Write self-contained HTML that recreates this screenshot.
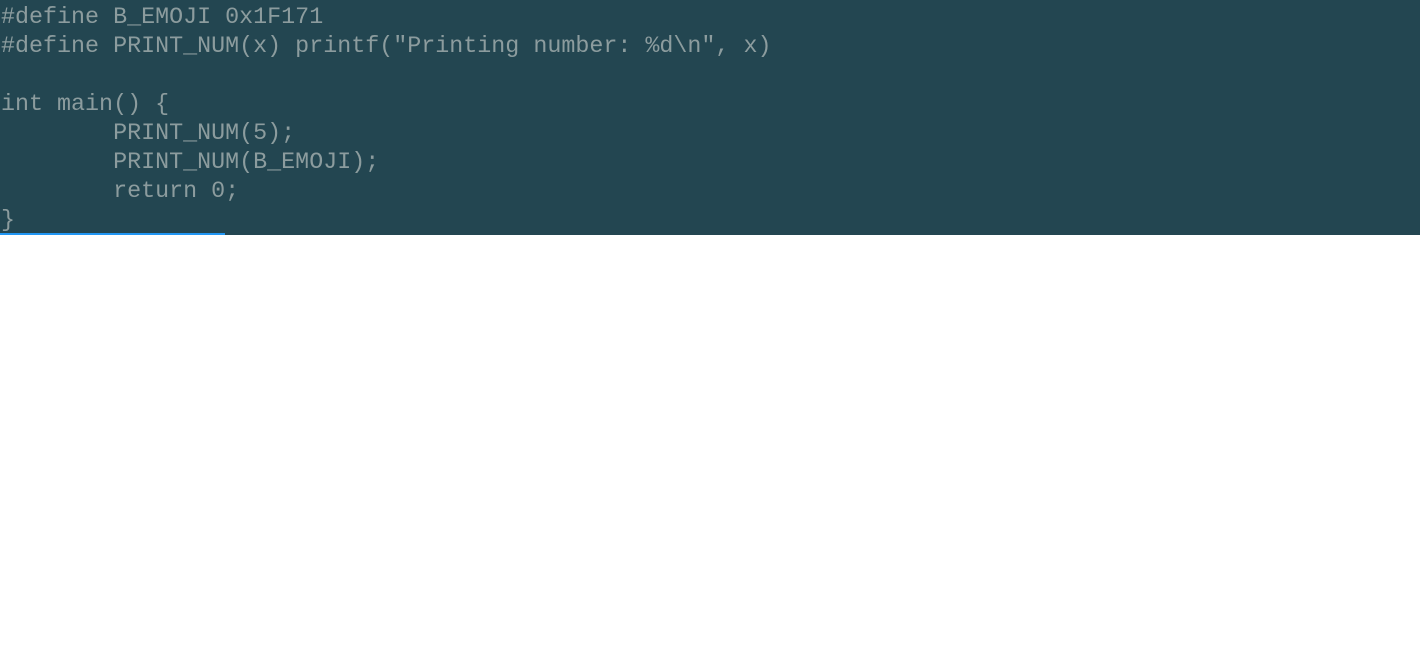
<!DOCTYPE html>
<html><head><meta charset="utf-8"><style>
html,body{margin:0;padding:0;background:#fff;width:1420px;height:668px;overflow:hidden}
.code{background:#234651;height:235px;position:relative;box-sizing:border-box;padding-top:4px}
pre{margin:0;font-family:"Liberation Mono","DejaVu Sans Mono",monospace;font-size:23.35px;line-height:29px;color:#8c9c9e;padding-left:1px}
.bar{position:absolute;left:0;top:233px;width:225px;height:2px;background:#2196f3}
</style></head><body>
<div class="code"><pre>#define B_EMOJI 0x1F171
#define PRINT_NUM(x) printf("Printing number: %d\n", x)

int main() {
        PRINT_NUM(5);
        PRINT_NUM(B_EMOJI);
        return 0;
}</pre><div class="bar"></div></div>
</body></html>
